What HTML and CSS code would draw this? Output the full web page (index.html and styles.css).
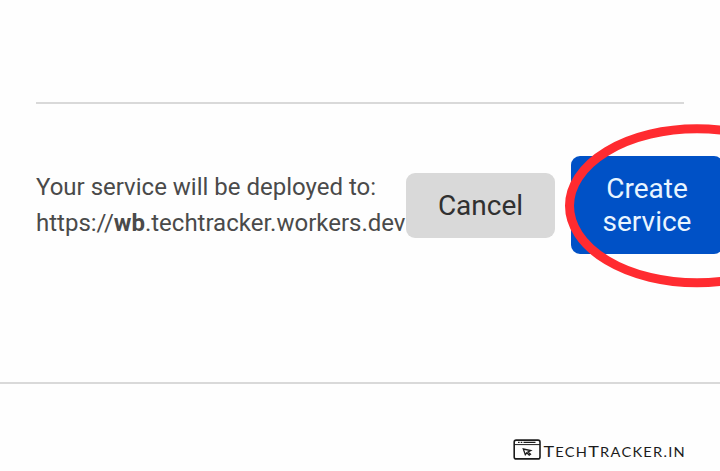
FILE: index.html
```html
<!DOCTYPE html>
<html lang="en">
<head>
<meta charset="utf-8">
<title>Create service</title>
<link rel="stylesheet" href="styles.css">
</head>
<body>
<main class="page">
  <section class="panel">
    <footer class="deploy">
      <p class="message">Your service will be deployed to:<br><span class="url">https://<b>wb</b>.techtracker.workers.dev</span></p>
      <div class="actions">
        <button class="btn cancel">Cancel</button>
        <button class="btn create">Create<br>service</button>
      </div>
    </footer>
  </section>
  <div class="brand">
    <svg class="brand-icon" viewBox="0 0 28 22" fill="none" stroke="#1c1c1c">
      <rect x="1.2" y="1.1" width="25.8" height="18.8" rx="2" stroke-width="1.6"/>
      <path d="M1 5.6H27" stroke-width="1"/>
      <path d="M5 3.3h1.6M7.7 3.3h1.6M10.5 3.3H22.5" stroke-width="1.2"/>
      <path d="M10.3 10l7.4 1.6-2.6 1.3 2.4 2.3-1.3 1-2.4-2.4-1.5 1.8z" stroke-width="1.3"/>
    </svg>
    <svg class="brand-name" viewBox="0 0 144 26">
      <text x="0.4" y="18.1" textLength="142.5" lengthAdjust="spacingAndGlyphs"><tspan class="cap">T</tspan>ECH<tspan class="cap">T</tspan>RACKER.IN</text>
    </svg>
  </div>
  <svg class="highlight" viewBox="0 0 160 170"><ellipse cx="137" cy="85.8" rx="127.5" ry="77"/></svg>
</main>
</body>
</html>
```
FILE: styles.css
```css
* { box-sizing: border-box; }

body {
  margin: 0;
  background: #fefefe;
  font-family: Roboto, sans-serif;
}

.page {
  position: relative;
  width: 720px;
  height: 471px;
  overflow: hidden;
}

.panel {
  height: 384px;
  padding: 102px 36px 0;
  border-bottom: 2px solid #d9d9d9;
}

.deploy {
  display: flex;
  align-items: center;
  height: 204px;
  border-top: 2px solid #d9d9d9;
}

.message {
  flex: none;
  width: 370px;
  margin: 0;
  color: #4a4a4a;
  font-size: 24px;
  line-height: 36px;
  white-space: nowrap;
}

.actions {
  display: flex;
  flex: none;
  align-items: center;
  gap: 16px;
}

.btn {
  flex: none;
  padding: 0;
  border: 0;
  border-radius: 9px;
  font: 28px/33px Roboto, sans-serif;
}

.cancel {
  width: 149px;
  height: 65px;
  background: #d9d9d9;
  color: #303030;
}

.create {
  width: 152px;
  height: 98px;
  background: #0051c6;
  color: #e9f5ff;
}

.brand {
  display: flex;
  gap: 2px;
  padding: 55px 0 0 513px;
}

.brand-icon {
  flex: none;
  width: 28px;
  height: 22px;
}

.brand-name {
  flex: none;
  width: 144px;
  height: 26px;
  overflow: visible;
  fill: #1c1c1c;
  font: 13px Lato, sans-serif;
  letter-spacing: 1.1px;
}

.brand-name .cap { font-size: 16px; }

/* Hand-drawn ring over the primary button */
.highlight {
  position: absolute;
  top: 120px;
  left: 560px;
  width: 160px;
  height: 170px;
  fill: none;
  stroke: #ff2b30;
  stroke-width: 9px;
}
```
